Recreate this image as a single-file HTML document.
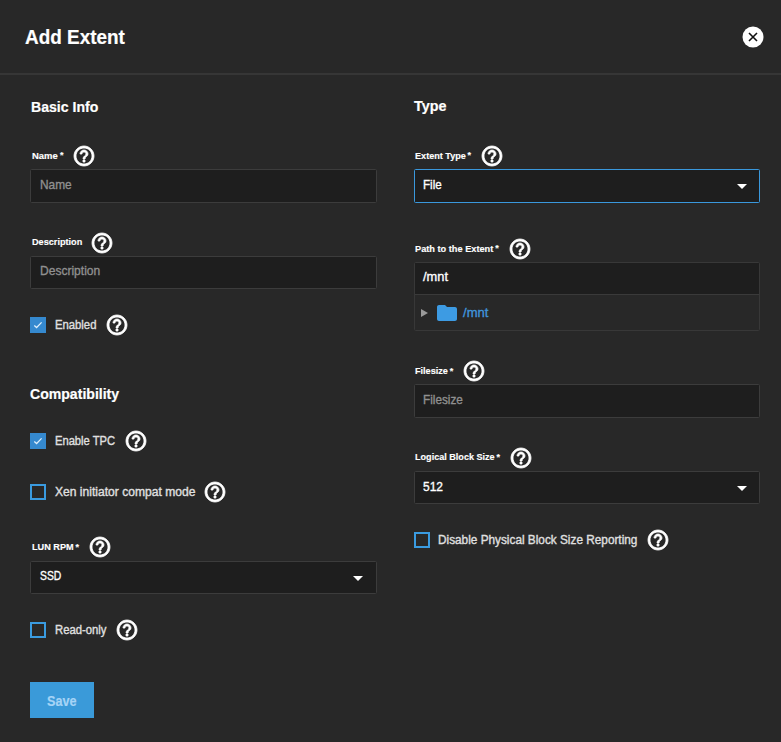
<!DOCTYPE html>
<html><head><meta charset="utf-8"><style>
html,body{margin:0;padding:0;}
body{width:781px;height:742px;overflow:hidden;background:#282828;position:relative;font-family:"Liberation Sans",sans-serif;}
.t{position:absolute;white-space:nowrap;-webkit-text-stroke:0.35px currentColor;}
.bl{display:inline-block;width:0;height:0;vertical-align:baseline;}
.ic{position:absolute;width:24px;height:24px;}
.ic svg{display:block;}
.bx{position:absolute;box-sizing:border-box;border-radius:1.5px;}
.cb{position:absolute;width:16px;height:16px;box-sizing:content-box;}
.cb svg{display:block;}
.ar{position:absolute;width:0;height:0;border-left:5px solid transparent;border-right:5px solid transparent;border-top:5px solid #fff;}
.hdr{position:absolute;left:0;top:73px;width:781px;height:2px;background:#363636;}
.close{position:absolute;left:742px;top:26px;width:22px;height:22px;}
.close svg{display:block;}
.save{position:absolute;left:30px;top:682px;width:64px;height:36px;background:#3a9ad9;}
</style></head><body>
<div class="hdr"></div>
<div class="t" id="t0" style="left:25.10px;top:24.01px;font-size:20.64px;line-height:25px;font-weight:700;-webkit-text-stroke:0.2px currentColor;color:#fff;transform:scaleX(0.9170);transform-origin:0 0;">Add Extent<span class="bl"></span></div>
<div class="close"><svg width="22" height="22" viewBox="0 0 22 22"><circle cx="11" cy="11" r="10.5" fill="#fff"/><path d="M7 7L15 15M15 7L7 15" stroke="#111" stroke-width="1.6"/></svg></div>
<div class="t" id="t1" style="left:30.60px;top:97.00px;font-size:15.55px;line-height:19px;font-weight:700;-webkit-text-stroke:0.2px currentColor;color:#fff;transform:scaleX(0.9064);transform-origin:0 0;">Basic Info<span class="bl"></span></div>
<div class="t" id="t2" style="left:32.00px;top:150.00px;font-size:9.88px;line-height:12px;font-weight:700;-webkit-text-stroke:0.15px currentColor;color:#fff;transform:scaleX(0.9591);transform-origin:0 0;">Name<span class="bl"></span></div>
<div class="t" id="t3" style="left:60.00px;top:150.01px;font-size:9px;line-height:11px;font-weight:700;-webkit-text-stroke:0.15px currentColor;color:#fff;">*<span class="bl"></span></div>
<div class="ic" style="left:72px;top:144px"><svg viewBox="0 0 24 24" width="24" height="24"><path fill="#fff" stroke="#fff" stroke-width="0.8" d="M11 18h2v-2h-2v2zm1-16C6.48 2 2 6.48 2 12s4.48 10 10 10 10-4.480 10-10S17.52 2 12 2zm0 18c-4.41 0-8-3.59-8-8s3.590-8 8-8 8 3.59 8 8-3.59 8-8 8zm0-14c-2.21 0-4 1.79-4 4h2c0-1.1.9-2 2-2s2 .9 2 2c0 2-3 1.75-3 5h2c0-2.25 3-2.5 3-5 0-2.21-1.79-4-4-4z"/></svg></div>
<div class="bx" style="left:30px;top:169px;width:347px;height:34px;background:#1e1e1e;border:1px solid #3c3c3c;"></div>
<div class="t" id="t4" style="left:39.50px;top:177.01px;font-size:13.37px;line-height:16px;color:#909090;transform:scaleX(0.8895);transform-origin:0 0;">Name<span class="bl"></span></div>
<div class="t" id="t5" style="left:31.70px;top:236.01px;font-size:9.88px;line-height:12px;font-weight:700;-webkit-text-stroke:0.15px currentColor;color:#fff;transform:scaleX(0.9257);transform-origin:0 0;">Description<span class="bl"></span></div>
<div class="ic" style="left:90px;top:231px"><svg viewBox="0 0 24 24" width="24" height="24"><path fill="#fff" stroke="#fff" stroke-width="0.8" d="M11 18h2v-2h-2v2zm1-16C6.48 2 2 6.48 2 12s4.48 10 10 10 10-4.480 10-10S17.52 2 12 2zm0 18c-4.41 0-8-3.59-8-8s3.590-8 8-8 8 3.59 8 8-3.59 8-8 8zm0-14c-2.21 0-4 1.79-4 4h2c0-1.1.9-2 2-2s2 .9 2 2c0 2-3 1.75-3 5h2c0-2.25 3-2.5 3-5 0-2.21-1.79-4-4-4z"/></svg></div>
<div class="bx" style="left:30px;top:256px;width:347px;height:33px;background:#1e1e1e;border:1px solid #3c3c3c;"></div>
<div class="t" id="t6" style="left:39.70px;top:263.01px;font-size:13.37px;line-height:16px;color:#909090;transform:scaleX(0.9009);transform-origin:0 0;">Description<span class="bl"></span></div>
<div class="cb" style="left:30px;top:317px;background:#3589cf"><svg width="16" height="16" viewBox="0 0 16 16"><polyline points="4.3,8.4 6.6,10.5 11.6,5.4" fill="none" stroke="#dceefc" stroke-width="1.3"/></svg></div>
<div class="t" id="t7" style="left:54.80px;top:318.01px;font-size:12.65px;line-height:15px;color:#e0e0e0;transform:scaleX(0.8926);transform-origin:0 0;">Enabled<span class="bl"></span></div>
<div class="ic" style="left:105px;top:313px"><svg viewBox="0 0 24 24" width="24" height="24"><path fill="#fff" stroke="#fff" stroke-width="0.8" d="M11 18h2v-2h-2v2zm1-16C6.48 2 2 6.48 2 12s4.48 10 10 10 10-4.480 10-10S17.52 2 12 2zm0 18c-4.41 0-8-3.59-8-8s3.590-8 8-8 8 3.59 8 8-3.59 8-8 8zm0-14c-2.21 0-4 1.79-4 4h2c0-1.1.9-2 2-2s2 .9 2 2c0 2-3 1.75-3 5h2c0-2.25 3-2.5 3-5 0-2.21-1.79-4-4-4z"/></svg></div>
<div class="t" id="t8" style="left:30.40px;top:384.00px;font-size:15.55px;line-height:19px;font-weight:700;-webkit-text-stroke:0.2px currentColor;color:#fff;transform:scaleX(0.9052);transform-origin:0 0;">Compatibility<span class="bl"></span></div>
<div class="cb" style="left:30px;top:433px;background:#3589cf"><svg width="16" height="16" viewBox="0 0 16 16"><polyline points="4.3,8.4 6.6,10.5 11.6,5.4" fill="none" stroke="#dceefc" stroke-width="1.3"/></svg></div>
<div class="t" id="t9" style="left:55.00px;top:434.00px;font-size:12.65px;line-height:15px;color:#e0e0e0;transform:scaleX(0.8834);transform-origin:0 0;">Enable TPC<span class="bl"></span></div>
<div class="ic" style="left:123.5px;top:429px"><svg viewBox="0 0 24 24" width="24" height="24"><path fill="#fff" stroke="#fff" stroke-width="0.8" d="M11 18h2v-2h-2v2zm1-16C6.48 2 2 6.48 2 12s4.48 10 10 10 10-4.480 10-10S17.52 2 12 2zm0 18c-4.41 0-8-3.59-8-8s3.590-8 8-8 8 3.59 8 8-3.59 8-8 8zm0-14c-2.21 0-4 1.79-4 4h2c0-1.1.9-2 2-2s2 .9 2 2c0 2-3 1.75-3 5h2c0-2.25 3-2.5 3-5 0-2.21-1.79-4-4-4z"/></svg></div>
<div class="cb" style="left:30px;top:484px;border:2px solid #3a9be0;width:12px;height:12px"></div>
<div class="t" id="t10" style="left:54.60px;top:485.00px;font-size:12.65px;line-height:15px;color:#e0e0e0;transform:scaleX(0.9561);transform-origin:0 0;">Xen initiator compat mode<span class="bl"></span></div>
<div class="ic" style="left:203.4px;top:480px"><svg viewBox="0 0 24 24" width="24" height="24"><path fill="#fff" stroke="#fff" stroke-width="0.8" d="M11 18h2v-2h-2v2zm1-16C6.48 2 2 6.48 2 12s4.48 10 10 10 10-4.480 10-10S17.52 2 12 2zm0 18c-4.41 0-8-3.59-8-8s3.590-8 8-8 8 3.59 8 8-3.59 8-8 8zm0-14c-2.21 0-4 1.79-4 4h2c0-1.1.9-2 2-2s2 .9 2 2c0 2-3 1.75-3 5h2c0-2.25 3-2.5 3-5 0-2.21-1.79-4-4-4z"/></svg></div>
<div class="t" id="t11" style="left:31.70px;top:541.00px;font-size:9.88px;line-height:12px;font-weight:700;-webkit-text-stroke:0.15px currentColor;color:#fff;transform:scaleX(0.9267);transform-origin:0 0;">LUN RPM<span class="bl"></span></div>
<div class="t" id="t12" style="left:75.60px;top:542.01px;font-size:9px;line-height:11px;font-weight:700;-webkit-text-stroke:0.15px currentColor;color:#fff;">*<span class="bl"></span></div>
<div class="ic" style="left:88px;top:535px"><svg viewBox="0 0 24 24" width="24" height="24"><path fill="#fff" stroke="#fff" stroke-width="0.8" d="M11 18h2v-2h-2v2zm1-16C6.48 2 2 6.48 2 12s4.48 10 10 10 10-4.480 10-10S17.52 2 12 2zm0 18c-4.41 0-8-3.59-8-8s3.590-8 8-8 8 3.59 8 8-3.59 8-8 8zm0-14c-2.21 0-4 1.79-4 4h2c0-1.1.9-2 2-2s2 .9 2 2c0 2-3 1.75-3 5h2c0-2.25 3-2.5 3-5 0-2.21-1.79-4-4-4z"/></svg></div>
<div class="bx" style="left:30px;top:561px;width:347px;height:33px;background:#1e1e1e;border:1px solid #3c3c3c;"></div>
<div class="t" id="t13" style="left:39.60px;top:568.00px;font-size:13.37px;line-height:16px;color:#fff;transform:scaleX(0.7751);transform-origin:0 0;">SSD<span class="bl"></span></div>
<div class="ar" style="left:353px;top:576px"></div>
<div class="cb" style="left:30px;top:622px;border:2px solid #3a9be0;width:12px;height:12px"></div>
<div class="t" id="t14" style="left:54.60px;top:623.01px;font-size:12.65px;line-height:15px;color:#e0e0e0;transform:scaleX(0.8938);transform-origin:0 0;">Read-only<span class="bl"></span></div>
<div class="ic" style="left:114.5px;top:618px"><svg viewBox="0 0 24 24" width="24" height="24"><path fill="#fff" stroke="#fff" stroke-width="0.8" d="M11 18h2v-2h-2v2zm1-16C6.48 2 2 6.48 2 12s4.48 10 10 10 10-4.480 10-10S17.52 2 12 2zm0 18c-4.41 0-8-3.59-8-8s3.590-8 8-8 8 3.59 8 8-3.59 8-8 8zm0-14c-2.21 0-4 1.79-4 4h2c0-1.1.9-2 2-2s2 .9 2 2c0 2-3 1.75-3 5h2c0-2.25 3-2.5 3-5 0-2.21-1.79-4-4-4z"/></svg></div>
<div class="save"></div>
<div class="t" id="t15" style="left:46.70px;top:692.01px;font-size:15.26px;line-height:18px;font-weight:700;-webkit-text-stroke:0.2px currentColor;color:#a6d4f6;transform:scaleX(0.8305);transform-origin:0 0;">Save<span class="bl"></span></div>
<div class="t" id="t16" style="left:413.70px;top:96.01px;font-size:15.55px;line-height:19px;font-weight:700;-webkit-text-stroke:0.2px currentColor;color:#fff;transform:scaleX(0.9215);transform-origin:0 0;">Type<span class="bl"></span></div>
<div class="t" id="t17" style="left:414.90px;top:150.00px;font-size:9.88px;line-height:12px;font-weight:700;-webkit-text-stroke:0.15px currentColor;color:#fff;transform:scaleX(0.9211);transform-origin:0 0;">Extent Type<span class="bl"></span></div>
<div class="t" id="t18" style="left:467.50px;top:150.01px;font-size:9px;line-height:11px;font-weight:700;-webkit-text-stroke:0.15px currentColor;color:#fff;">*<span class="bl"></span></div>
<div class="ic" style="left:480.3px;top:144px"><svg viewBox="0 0 24 24" width="24" height="24"><path fill="#fff" stroke="#fff" stroke-width="0.8" d="M11 18h2v-2h-2v2zm1-16C6.48 2 2 6.48 2 12s4.48 10 10 10 10-4.480 10-10S17.52 2 12 2zm0 18c-4.41 0-8-3.59-8-8s3.590-8 8-8 8 3.59 8 8-3.59 8-8 8zm0-14c-2.21 0-4 1.79-4 4h2c0-1.1.9-2 2-2s2 .9 2 2c0 2-3 1.75-3 5h2c0-2.25 3-2.5 3-5 0-2.21-1.79-4-4-4z"/></svg></div>
<div class="bx" style="left:414px;top:169px;width:346px;height:34px;background:#1e1e1e;border:1px solid #3a98dc;"></div>
<div class="t" id="t19" style="left:422.70px;top:177.00px;font-size:13.37px;line-height:16px;color:#fff;transform:scaleX(0.8690);transform-origin:0 0;">File<span class="bl"></span></div>
<div class="ar" style="left:737px;top:184px"></div>
<div class="t" id="t20" style="left:414.90px;top:243.01px;font-size:9.88px;line-height:12px;font-weight:700;-webkit-text-stroke:0.15px currentColor;color:#fff;transform:scaleX(0.9324);transform-origin:0 0;">Path to the Extent<span class="bl"></span></div>
<div class="t" id="t21" style="left:495.20px;top:243.01px;font-size:9px;line-height:11px;font-weight:700;-webkit-text-stroke:0.15px currentColor;color:#fff;">*<span class="bl"></span></div>
<div class="ic" style="left:508px;top:237px"><svg viewBox="0 0 24 24" width="24" height="24"><path fill="#fff" stroke="#fff" stroke-width="0.8" d="M11 18h2v-2h-2v2zm1-16C6.48 2 2 6.48 2 12s4.48 10 10 10 10-4.480 10-10S17.52 2 12 2zm0 18c-4.41 0-8-3.59-8-8s3.590-8 8-8 8 3.59 8 8-3.59 8-8 8zm0-14c-2.21 0-4 1.79-4 4h2c0-1.1.9-2 2-2s2 .9 2 2c0 2-3 1.75-3 5h2c0-2.25 3-2.5 3-5 0-2.21-1.79-4-4-4z"/></svg></div>
<div class="bx" style="left:414px;top:262px;width:346px;height:69px;background:#282828;border:1px solid #383838;"></div>
<div style="position:absolute;left:415px;top:263px;width:344px;height:31px;background:#1e1e1e;border-bottom:1px solid #3a3a3a"></div>
<div class="t" id="t22" style="left:422.90px;top:269.00px;font-size:13.37px;line-height:16px;color:#fff;transform:scaleX(0.9623);transform-origin:0 0;">/mnt<span class="bl"></span></div>
<div style="position:absolute;left:421px;top:309px;width:0;height:0;border-left:7px solid #9a9a9a;border-top:4px solid transparent;border-bottom:4px solid transparent"></div>
<div class="ic" style="left:435px;top:301px"><svg viewBox="0 0 24 24" width="24" height="24"><path fill="#3d9be3" d="M10 4H4c-1.1 0-1.99.9-1.99 2L2 18c0 1.1.9 2 2 2h16c1.1 0 2-.9 2-2V8c0-1.1-.9-2-2-2h-8l-2-2z"/></svg></div>
<div class="t" id="t23" style="left:462.60px;top:305.00px;font-size:13.37px;line-height:16px;color:#4094dc;transform:scaleX(0.9777);transform-origin:0 0;">/mnt<span class="bl"></span></div>
<div class="t" id="t24" style="left:415.00px;top:365.01px;font-size:9.88px;line-height:12px;font-weight:700;-webkit-text-stroke:0.15px currentColor;color:#fff;transform:scaleX(0.9216);transform-origin:0 0;">Filesize<span class="bl"></span></div>
<div class="t" id="t25" style="left:449.80px;top:366.01px;font-size:9px;line-height:11px;font-weight:700;-webkit-text-stroke:0.15px currentColor;color:#fff;">*<span class="bl"></span></div>
<div class="ic" style="left:462.4px;top:359px"><svg viewBox="0 0 24 24" width="24" height="24"><path fill="#fff" stroke="#fff" stroke-width="0.8" d="M11 18h2v-2h-2v2zm1-16C6.48 2 2 6.48 2 12s4.48 10 10 10 10-4.480 10-10S17.52 2 12 2zm0 18c-4.41 0-8-3.59-8-8s3.590-8 8-8 8 3.59 8 8-3.59 8-8 8zm0-14c-2.21 0-4 1.79-4 4h2c0-1.1.9-2 2-2s2 .9 2 2c0 2-3 1.75-3 5h2c0-2.25 3-2.5 3-5 0-2.21-1.79-4-4-4z"/></svg></div>
<div class="bx" style="left:414px;top:384px;width:346px;height:34px;background:#1e1e1e;border:1px solid #3c3c3c;"></div>
<div class="t" id="t26" style="left:422.70px;top:392.00px;font-size:13.37px;line-height:16px;color:#909090;transform:scaleX(0.8812);transform-origin:0 0;">Filesize<span class="bl"></span></div>
<div class="t" id="t27" style="left:414.90px;top:451.00px;font-size:9.88px;line-height:12px;font-weight:700;-webkit-text-stroke:0.15px currentColor;color:#fff;transform:scaleX(0.9188);transform-origin:0 0;">Logical Block Size<span class="bl"></span></div>
<div class="t" id="t28" style="left:496.50px;top:452.01px;font-size:9px;line-height:11px;font-weight:700;-webkit-text-stroke:0.15px currentColor;color:#fff;">*<span class="bl"></span></div>
<div class="ic" style="left:509.29999999999995px;top:446px"><svg viewBox="0 0 24 24" width="24" height="24"><path fill="#fff" stroke="#fff" stroke-width="0.8" d="M11 18h2v-2h-2v2zm1-16C6.48 2 2 6.48 2 12s4.48 10 10 10 10-4.480 10-10S17.52 2 12 2zm0 18c-4.41 0-8-3.59-8-8s3.590-8 8-8 8 3.59 8 8-3.59 8-8 8zm0-14c-2.21 0-4 1.79-4 4h2c0-1.1.9-2 2-2s2 .9 2 2c0 2-3 1.75-3 5h2c0-2.25 3-2.5 3-5 0-2.21-1.79-4-4-4z"/></svg></div>
<div class="bx" style="left:414px;top:471px;width:346px;height:33px;background:#1e1e1e;border:1px solid #3c3c3c;"></div>
<div class="t" id="t29" style="left:422.60px;top:479.01px;font-size:13.37px;line-height:16px;color:#fff;transform:scaleX(0.8969);transform-origin:0 0;">512<span class="bl"></span></div>
<div class="ar" style="left:737px;top:486px"></div>
<div class="cb" style="left:414px;top:532px;border:2px solid #3a9be0;width:12px;height:12px"></div>
<div class="t" id="t30" style="left:437.60px;top:533.00px;font-size:12.65px;line-height:15px;color:#e0e0e0;transform:scaleX(0.9336);transform-origin:0 0;">Disable Physical Block Size Reporting<span class="bl"></span></div>
<div class="ic" style="left:645.5px;top:528px"><svg viewBox="0 0 24 24" width="24" height="24"><path fill="#fff" stroke="#fff" stroke-width="0.8" d="M11 18h2v-2h-2v2zm1-16C6.48 2 2 6.48 2 12s4.48 10 10 10 10-4.480 10-10S17.52 2 12 2zm0 18c-4.41 0-8-3.59-8-8s3.590-8 8-8 8 3.59 8 8-3.59 8-8 8zm0-14c-2.21 0-4 1.79-4 4h2c0-1.1.9-2 2-2s2 .9 2 2c0 2-3 1.75-3 5h2c0-2.25 3-2.5 3-5 0-2.21-1.79-4-4-4z"/></svg></div>
</body></html>
